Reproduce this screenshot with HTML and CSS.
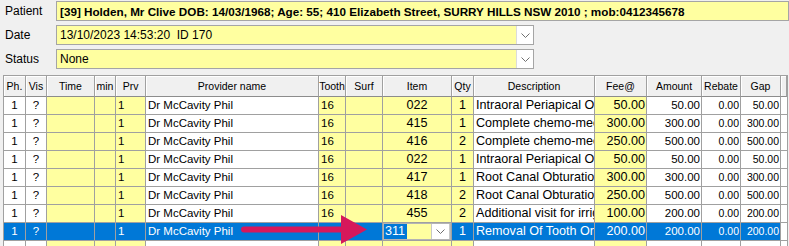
FILE: index.html
```html
<!DOCTYPE html>
<html>
<head>
<meta charset="utf-8">
<link rel="stylesheet" href="styles.css">
</head>
<body>
<div class="form">
  <div class="field-row"><span class="lbl">Patient</span><div class="input wide"><span class="val bold">[39] Holden, Mr Clive DOB: 14/03/1968; Age: 55; 410 Elizabeth Street, SURRY HILLS NSW 2010 ; mob:0412345678</span></div></div>
  <div class="field-row"><span class="lbl">Date</span><div class="input combo"><span class="val">13/10/2023 14:53:20&nbsp; ID 170</span><span class="dd"><svg width="9" height="5" viewBox="0 0 9 5"><polyline points="0.5,0.5 4.5,4.5 8.5,0.5" fill="none" stroke="#707070" stroke-width="1"/></svg></span></div></div>
  <div class="field-row"><span class="lbl">Status</span><div class="input combo"><span class="val">None</span><span class="dd"><svg width="9" height="5" viewBox="0 0 9 5"><polyline points="0.5,0.5 4.5,4.5 8.5,0.5" fill="none" stroke="#707070" stroke-width="1"/></svg></span></div></div>
</div>

<div class="grid-wrap">
  <div class="row head">
    <div class="c">Ph.</div><div class="c">Vis</div><div class="c">Time</div><div class="c">min</div><div class="c">Prv</div><div class="c">Provider name</div><div class="c">Tooth</div><div class="c">Surf</div><div class="c">Item</div><div class="c">Qty</div><div class="c">Description</div><div class="c">Fee@</div><div class="c">Amount</div><div class="c">Rebate</div><div class="c">Gap</div><div class="c"></div>
  </div>

  <div class="row">
    <div class="c w ctr">1</div><div class="c w ctr">?</div><div class="c y"></div><div class="c y"></div><div class="c y">1</div><div class="c w">Dr McCavity Phil</div><div class="c y">16</div><div class="c y"></div><div class="c y ctr lg">022</div><div class="c y ctr lg">1</div><div class="c w lg">Intraoral Periapical Or Bitewing Radiograph</div><div class="c y num lg">50.00</div><div class="c w num">50.00</div><div class="c w num sm">0.00</div><div class="c w num sm">50.00</div><div class="c w fill"></div>
  </div>
  <div class="row">
    <div class="c w ctr">1</div><div class="c w ctr">?</div><div class="c y"></div><div class="c y"></div><div class="c y">1</div><div class="c w">Dr McCavity Phil</div><div class="c y">16</div><div class="c y"></div><div class="c y ctr lg">415</div><div class="c y ctr lg">1</div><div class="c w lg">Complete chemo-mechanical preparation of root canal</div><div class="c y num lg">300.00</div><div class="c w num">300.00</div><div class="c w num sm">0.00</div><div class="c w num sm">300.00</div><div class="c w fill"></div>
  </div>
  <div class="row">
    <div class="c w ctr">1</div><div class="c w ctr">?</div><div class="c y"></div><div class="c y"></div><div class="c y">1</div><div class="c w">Dr McCavity Phil</div><div class="c y">16</div><div class="c y"></div><div class="c y ctr lg">416</div><div class="c y ctr lg">2</div><div class="c w lg">Complete chemo-mechanical preparation of root canal</div><div class="c y num lg">250.00</div><div class="c w num">500.00</div><div class="c w num sm">0.00</div><div class="c w num sm">500.00</div><div class="c w fill"></div>
  </div>
  <div class="row">
    <div class="c w ctr">1</div><div class="c w ctr">?</div><div class="c y"></div><div class="c y"></div><div class="c y">1</div><div class="c w">Dr McCavity Phil</div><div class="c y">16</div><div class="c y"></div><div class="c y ctr lg">022</div><div class="c y ctr lg">1</div><div class="c w lg">Intraoral Periapical Or Bitewing Radiograph</div><div class="c y num lg">50.00</div><div class="c w num">50.00</div><div class="c w num sm">0.00</div><div class="c w num sm">50.00</div><div class="c w fill"></div>
  </div>
  <div class="row">
    <div class="c w ctr">1</div><div class="c w ctr">?</div><div class="c y"></div><div class="c y"></div><div class="c y">1</div><div class="c w">Dr McCavity Phil</div><div class="c y">16</div><div class="c y"></div><div class="c y ctr lg">417</div><div class="c y ctr lg">1</div><div class="c w lg">Root Canal Obturation</div><div class="c y num lg">300.00</div><div class="c w num">300.00</div><div class="c w num sm">0.00</div><div class="c w num sm">300.00</div><div class="c w fill"></div>
  </div>
  <div class="row">
    <div class="c w ctr">1</div><div class="c w ctr">?</div><div class="c y"></div><div class="c y"></div><div class="c y">1</div><div class="c w">Dr McCavity Phil</div><div class="c y">16</div><div class="c y"></div><div class="c y ctr lg">418</div><div class="c y ctr lg">2</div><div class="c w lg">Root Canal Obturation</div><div class="c y num lg">250.00</div><div class="c w num">500.00</div><div class="c w num sm">0.00</div><div class="c w num sm">500.00</div><div class="c w fill"></div>
  </div>
  <div class="row">
    <div class="c w ctr">1</div><div class="c w ctr">?</div><div class="c y"></div><div class="c y"></div><div class="c y">1</div><div class="c w">Dr McCavity Phil</div><div class="c y">16</div><div class="c y"></div><div class="c y ctr lg">455</div><div class="c y ctr lg">2</div><div class="c w lg">Additional visit for irrigation</div><div class="c y num lg">100.00</div><div class="c w num">200.00</div><div class="c w num sm">0.00</div><div class="c w num sm">200.00</div><div class="c w fill"></div>
  </div>
  <div class="row sel">
    <div class="c ctr">1</div><div class="c ctr">?</div><div class="c"></div><div class="c"></div><div class="c">1</div><div class="c">Dr McCavity Phil</div><div class="c"></div><div class="c"></div>
    <div class="c editor-cell"><div class="editor"><span class="seltext">311</span><span class="dd ed-dd"><svg width="9" height="5" viewBox="0 0 9 5"><polyline points="0.5,0.5 4.5,4.5 8.5,0.5" fill="none" stroke="#707070" stroke-width="1"/></svg></span></div></div>
    <div class="c ctr lg">1</div><div class="c lg">Removal Of Tooth Or Part(s) Thereof</div><div class="c num lg">200.00</div><div class="c num">200.00</div><div class="c num sm">0.00</div><div class="c num sm">200.00</div><div class="c w fill"></div>
  </div>
  <div class="row">
    <div class="c w"></div><div class="c w"></div><div class="c y"></div><div class="c y"></div><div class="c y"></div><div class="c w"></div><div class="c y"></div><div class="c y"></div><div class="c y"></div><div class="c y"></div><div class="c w"></div><div class="c y"></div><div class="c w"></div><div class="c w"></div><div class="c w"></div><div class="c w fill"></div>
  </div>
</div>

<svg class="arrow" width="130" height="32" viewBox="240 214 130 32">
  <rect x="241" y="226.5" width="102" height="6" rx="3" fill="#d6185b"/>
  <polygon points="341,215 367,229.5 341,244" fill="#d6185b"/>
</svg>
</body>
</html>
```

FILE: styles.css
```css
html, body {
  margin: 0;
  padding: 0;
}
body {
  width: 789px;
  height: 246px;
  overflow: hidden;
  background: #f0f0f0;
  font-family: "Liberation Sans", Arial, sans-serif;
  color: #000;
  position: relative;
}

.form {
  display: flex;
  flex-direction: column;
  gap: 4px;
  padding: 1px 0 0 5px;
}
.field-row {
  display: flex;
  align-items: center;
  height: 20px;
}
.lbl {
  width: 51px;
  font-size: 12px;
}
.input {
  height: 20px;
  box-sizing: border-box;
  border: 1px solid #a5a5a5;
  background: #ffffa0;
  font-size: 12px;
  display: flex;
  align-items: center;
  padding-left: 3px;
  overflow: hidden;
  white-space: nowrap;
}
.wide {
  width: 733px;
}
.bold {
  font-weight: bold;
  font-size: 11.7px;
}
.combo {
  width: 478px;
  justify-content: space-between;
  padding-right: 0;
}
.dd {
  width: 17px;
  height: 18px;
  box-sizing: border-box;
  background: #fff;
  border-left: 1px solid #dcdcdc;
  display: flex;
  align-items: center;
  justify-content: center;
}

.grid-wrap {
  margin: 6px 0 0 3px;
  width: 785px;
  box-sizing: border-box;
  border: 1px solid #a0a0a0;
  border-bottom: none;
  height: 200px;
  overflow: hidden;
  background: #fff;
}
.row {
  display: grid;
  grid-template-columns: 22px 21px 48px 21px 30px 173px 27px 37px 69px 22px 121px 52px 55px 39px 40px 1fr;
  height: 18px;
}
.c {
  box-sizing: border-box;
  height: 18px;
  border-right: 1px solid #a0a0a0;
  border-bottom: 1px solid #a0a0a0;
  overflow: hidden;
  white-space: nowrap;
  font-size: 11.5px;
  line-height: 17px;
  padding: 0 2px;
}
.row .fill {
  border-right: none;
}
.head {
  height: 21px;
  background: #f0f0f0;
}
.head .c {
  height: 21px;
  font-size: 10.5px;
  line-height: 20px;
  text-align: center;
  padding: 0;
  border-right: 1px solid #a0a0a0;
  border-bottom: 1px solid #8c8c8c;
  box-shadow: inset 1px 1px 0 #fff;
}
.w { background: #fff; }
.y { background: #ffffa0; }
.ctr { text-align: center; }
.num { text-align: right; padding-right: 1px; }
.lg { font-size: 12.6px; }
.sm { font-size: 10.5px; }

.sel .c {
  background: #0078d7;
  color: #fff;
}
.sel .fill {
  background: #fff;
}
.sel .editor-cell {
  padding: 0;
  background: #0078d7;
}
.editor {
  height: 17px;
  box-sizing: border-box;
  border: 1px solid #b4b4b4;
  background: #ffffa0;
  display: flex;
  align-items: center;
  justify-content: space-between;
}
.seltext {
  background: #0078d7;
  color: #fff;
  font-size: 12.6px;
  line-height: 15px;
  padding: 0 2px 0 1px;
  width: 20px;
}
.ed-dd {
  width: 19px;
  height: 15px;
  border: 1px solid #c8c8c8;
  border-top: none;
  border-bottom: none;
}

.arrow {
  position: absolute;
  left: 240px;
  top: 214px;
}
```
